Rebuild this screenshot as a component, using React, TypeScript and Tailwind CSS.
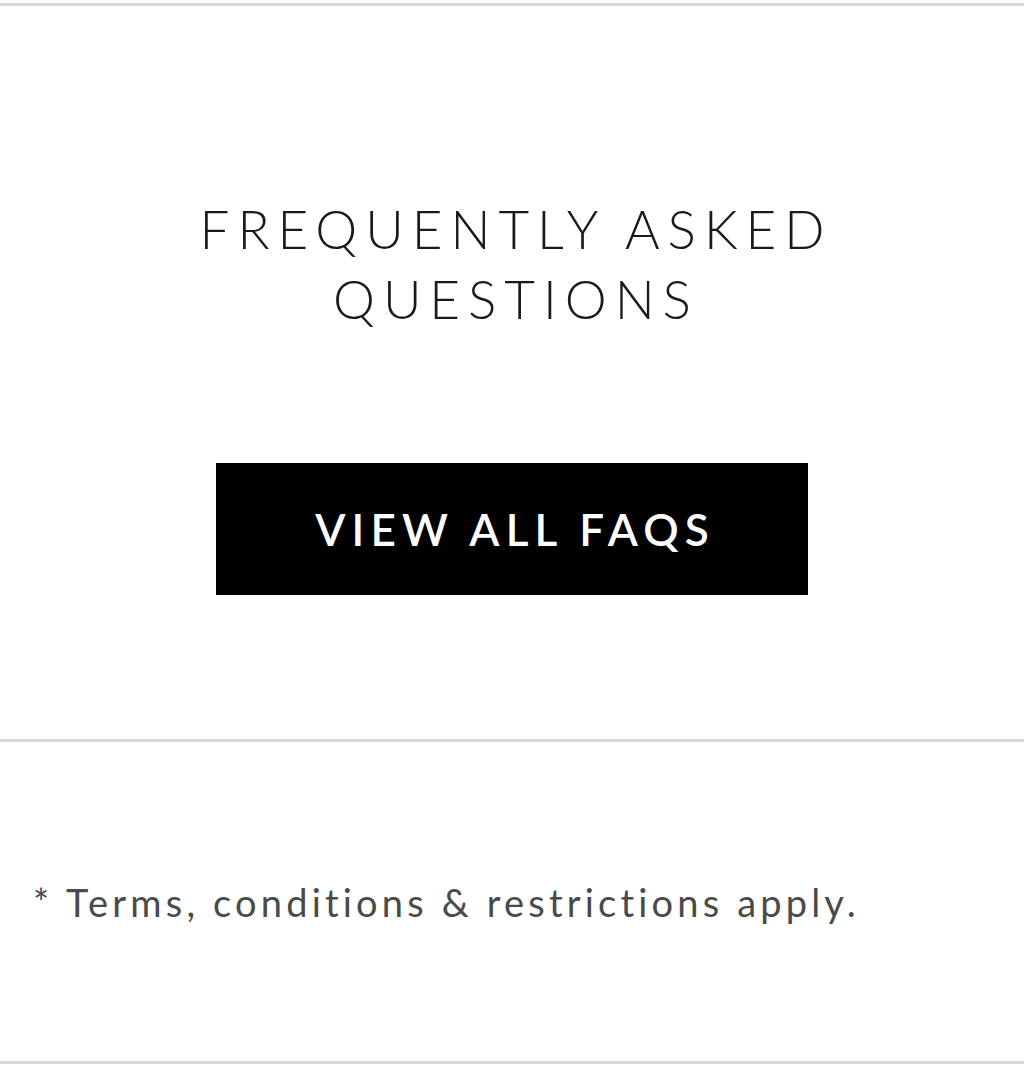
export default function App() {
  return (
    <div className="w-[1024px] h-[1069px] bg-white overflow-hidden" style={{ fontFamily: 'Lato, "Noto Sans", sans-serif' }}>
      <div className="mt-[3px] border-t-[3px] border-[#d9d9d9]" />
      <section className="h-[733px] flex flex-col items-center">
        <h2 className="mt-[188px] pl-[0.15em] text-center text-[53px] leading-[70px] font-light tracking-[0.15em] text-[#1a1a1a]">
          FREQUENTLY ASKED
          <br />
          QUESTIONS
        </h2>
        <button className="mt-[129px] w-[592px] h-[132px] pl-[0.14em] bg-black text-white text-[44px] font-semibold tracking-[0.14em]">
          VIEW ALL FAQS
        </button>
      </section>
      <div className="border-t-[3px] border-[#d9d9d9]" />
      <section className="h-[319px] flex items-center px-[33px]">
        <p className="text-[38px] text-[#4a4a4a] tracking-[0.11em] mt-[2px]">
          * Terms, conditions &amp; restrictions apply.
        </p>
      </section>
      <div className="border-t-[3px] border-[#d9d9d9]" />
    </div>
  );
}
